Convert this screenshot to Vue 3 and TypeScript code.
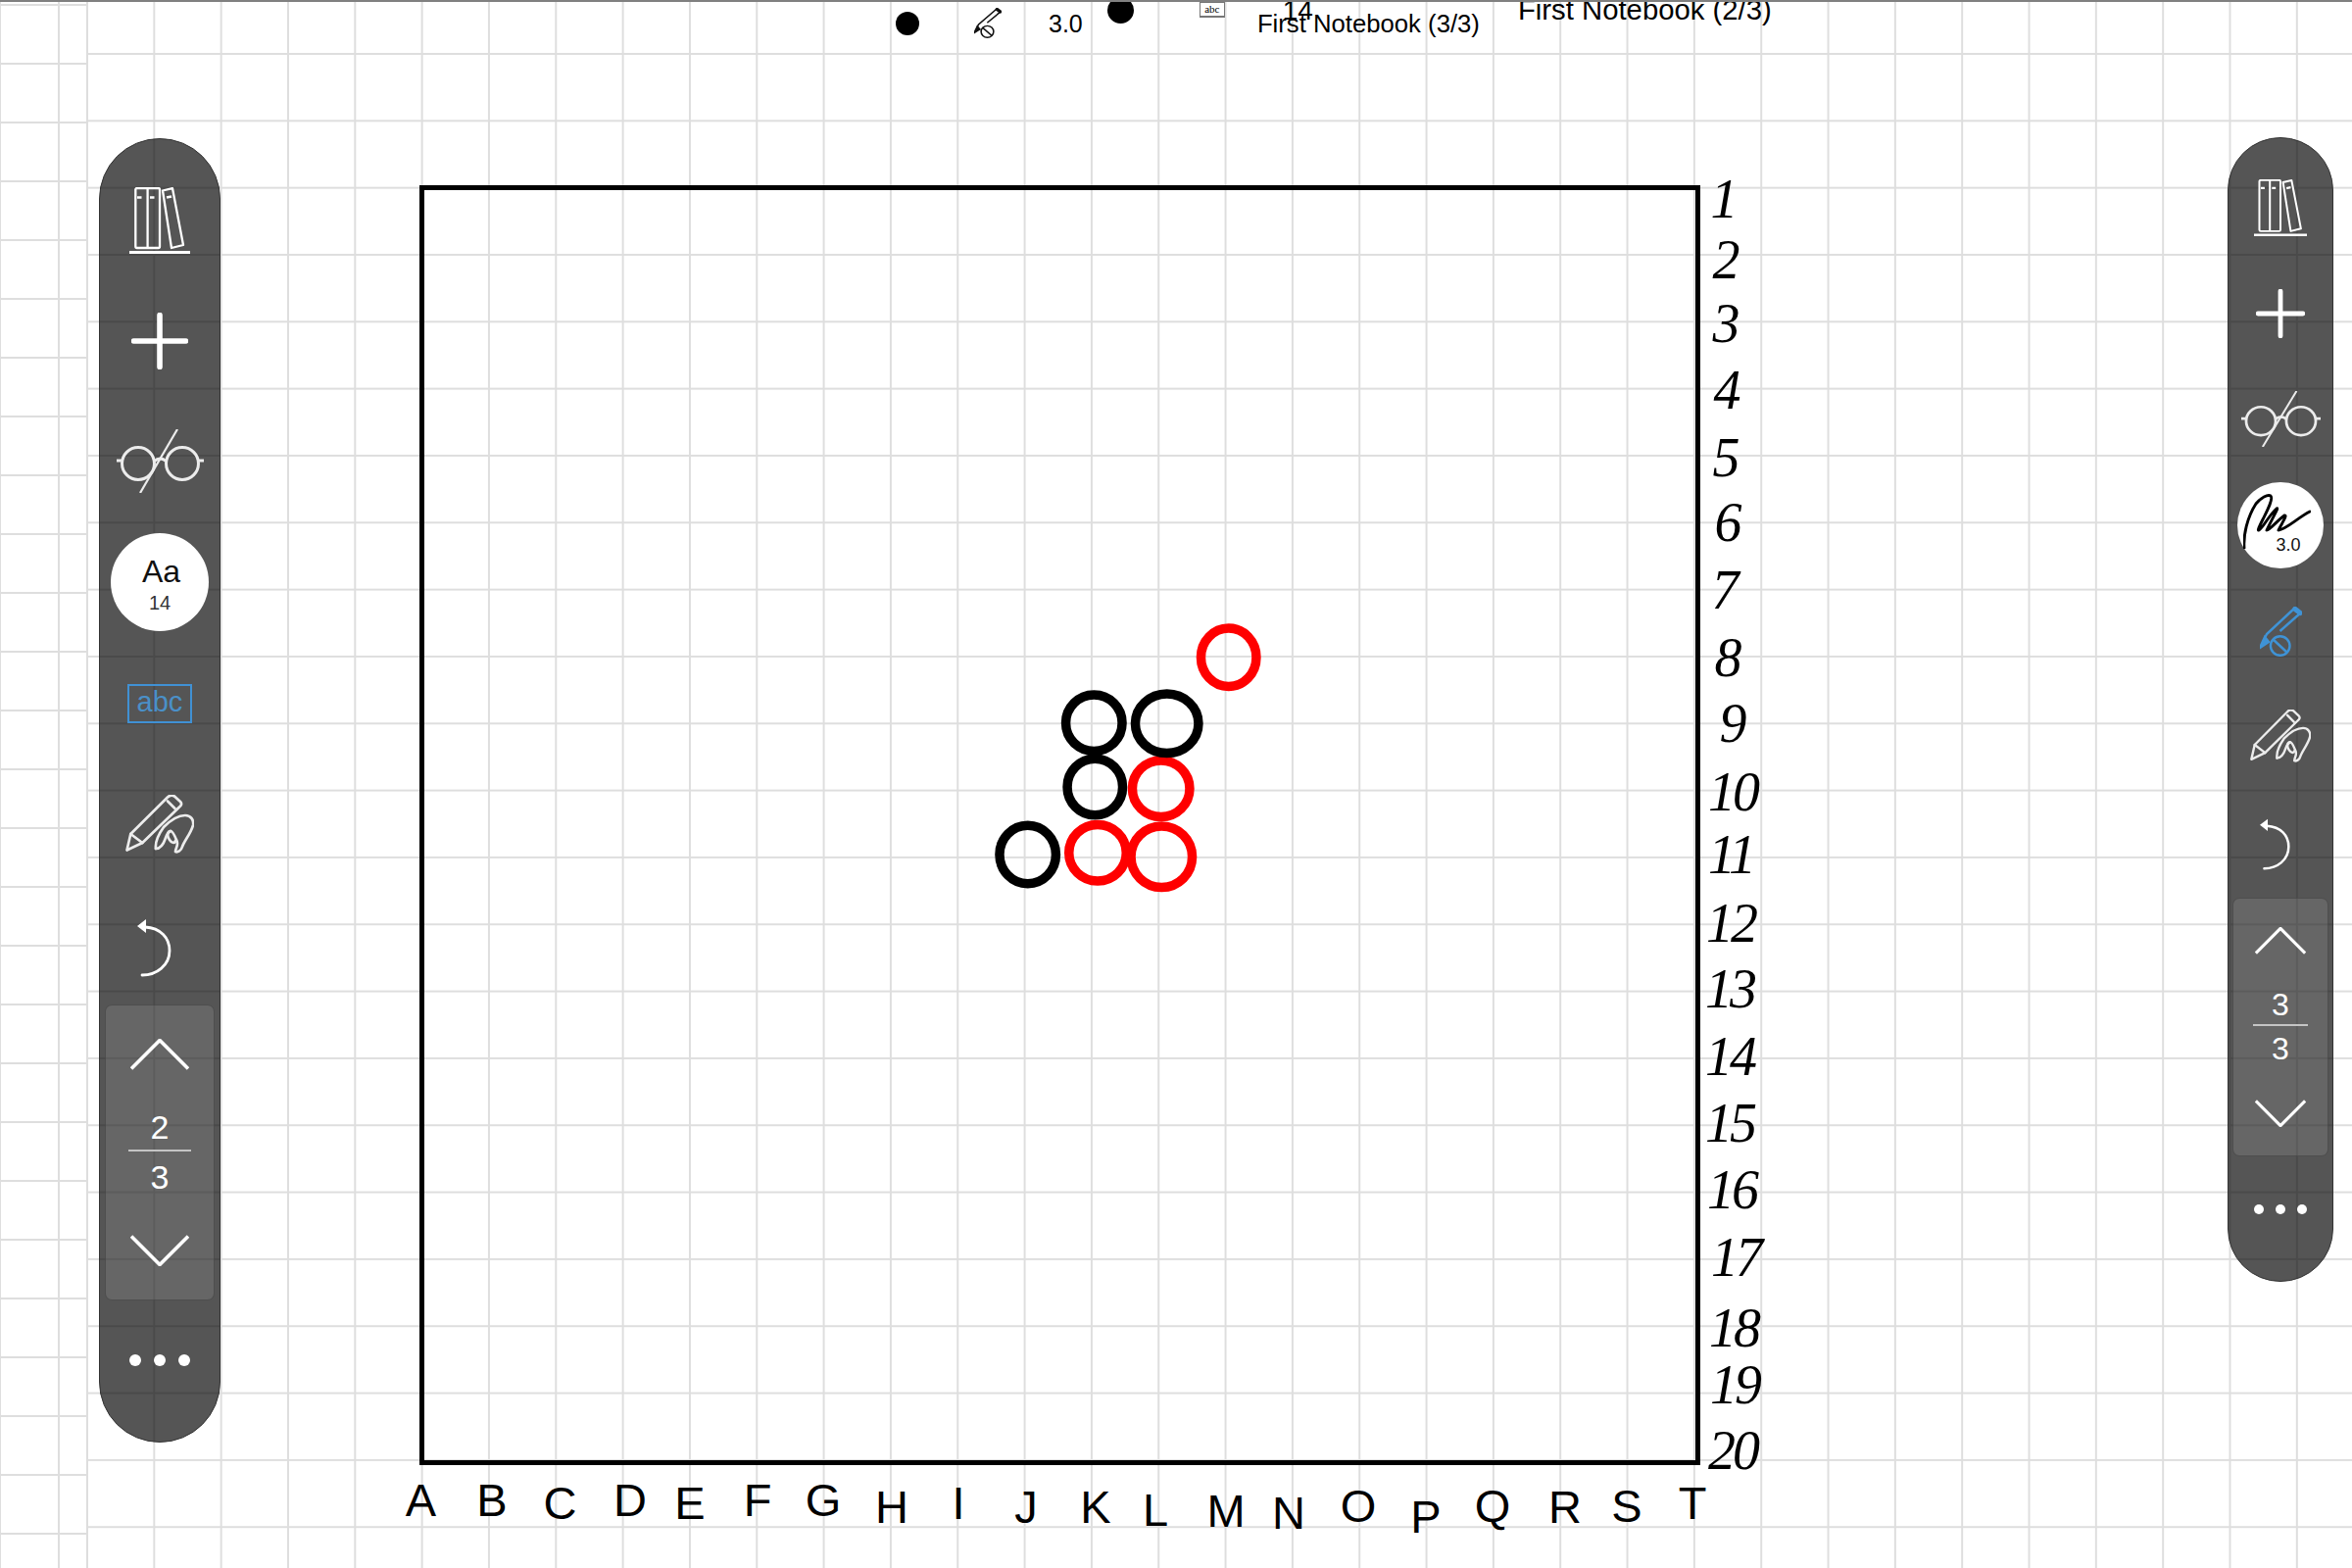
<script setup lang="ts">
interface Label { t: string; x: number; y: number }
interface Stone { cx: number; cy: number; w: number; h: number; c: string }

const letterRows: [string, number, number][] = [
  ['A', 429.5, 1547], ['B', 502, 1547], ['C', 571.5, 1550], ['D', 643, 1547], ['E', 704, 1550],
  ['F', 773, 1547], ['G', 840, 1547], ['H', 910, 1554], ['I', 978, 1550], ['J', 1047, 1554],
  ['K', 1118, 1554], ['L', 1179, 1557], ['M', 1251, 1558], ['N', 1315, 1560], ['O', 1386, 1553],
  ['P', 1455, 1564], ['Q', 1523, 1553], ['R', 1597, 1554], ['S', 1660, 1553], ['T', 1727, 1550],
]
const letters: Label[] = letterRows.map(([t, x, y]) => ({ t, x, y }))

const numberRows: [string, number, number][] = [
  ['1', 1758, 222], ['2', 1760, 284], ['3', 1760, 349], ['4', 1761, 417], ['5', 1760, 486],
  ['6', 1762, 552], ['7', 1759, 621], ['8', 1762, 690], ['9', 1767, 757], ['10', 1768, 827],
  ['11', 1766, 891], ['12', 1766, 961], ['13', 1765, 1028], ['14', 1765, 1097], ['15', 1765, 1165],
  ['16', 1767, 1233], ['17', 1771, 1302], ['18', 1769, 1374], ['19', 1770, 1432], ['20', 1768, 1499],
]
const numbers: Label[] = numberRows.map(([t, x, y]) => ({ t, x, y }))

const RED = '#ff0000'
const BLACK = '#000000'
const stones: Stone[] = [
  { cx: 1184.7, cy: 804.7, w: 68, h: 67, c: RED },
  { cx: 1190.7, cy: 738.3, w: 74, h: 70, c: BLACK },
  { cx: 1116.3, cy: 737.7, w: 67, h: 67, c: BLACK },
  { cx: 1117.3, cy: 803, w: 66, h: 67, c: BLACK },
  { cx: 1048.7, cy: 872, w: 67, h: 69, c: BLACK },
  { cx: 1120, cy: 870.3, w: 68, h: 67, c: RED },
  { cx: 1185.3, cy: 874.3, w: 72, h: 72, c: RED },
  { cx: 1253.7, cy: 670.7, w: 66, h: 69, c: RED },
]
const STROKE = 9.5

const toolbars = [
  { id: 'left', page: '2', total: '3' },
  { id: 'right', page: '3', total: '3' },
]
</script>

<template>
  <div class="page">
    <svg class="defs" width="0" height="0" aria-hidden="true">
      <symbol id="i-books" viewBox="0 0 62 68" preserveAspectRatio="none">
        <g fill="none" stroke="currentColor" stroke-width="2.3">
          <rect x="6.3" y="1" width="24.7" height="61" rx="1.5" />
          <path d="M18.6 1V62" />
          <path d="M34 3.5 44 1.2 55 59 43 62Z" stroke-linejoin="round" />
          <path d="M8 10.5h4.5M21 10.5h4.5M38 10.6l5-1" stroke-width="2.6" />
          <path d="M0 66.5H62" stroke-width="3" />
        </g>
      </symbol>
      <symbol id="i-plus" viewBox="0 0 58 58" preserveAspectRatio="none">
        <path d="M29 2.5V55.5M2.5 29H55.5" fill="none" stroke="currentColor" stroke-width="5.6" stroke-linecap="round" />
      </symbol>
      <symbol id="i-glasses" viewBox="0 0 89 65" preserveAspectRatio="none">
        <g fill="none" stroke="currentColor" stroke-width="3">
          <circle cx="22" cy="35" r="16.5" />
          <circle cx="67" cy="35" r="16.5" />
          <path d="M0 32H5.5M83.5 32H89" />
          <path d="M38 33Q44.5 27 51 33" />
          <path d="M24 65 62 0" stroke-width="2.2" />
        </g>
      </symbol>
      <symbol id="i-pencil-hand" viewBox="0 0 70 60" preserveAspectRatio="none">
        <g fill="none" stroke="currentColor" stroke-width="2.7" stroke-linejoin="round" stroke-linecap="round">
          <path d="M1.5 56.5 5.3 40 43 2.5C45 .5 48 .2 50 1.5L56 7C58 9 57 11 55 12.5L17.3 49Z" />
          <path d="M5.3 40 17.3 49M43 6.5 50.5 14" />
          <path d="M31 55C30 48 34 40 39 33 46 26 54 21 61 21 67 21 70 26 69 31 67 39 60 47 58 53 57 57 53 59 51 58 51 54 55 51 52 46 50 41 48 37 46 37 43 37 42 42 45 46 47 49 50 50 51 47" />
          <path d="M31 55C36 55 39 50 41 44 42 41 44 38 46 37" />
        </g>
      </symbol>
      <symbol id="i-undo" viewBox="0 0 36 62" preserveAspectRatio="none">
        <path d="M8 11C24 12 33 22 33 35 33 50 20 60 5 60" fill="none" stroke="currentColor" stroke-width="2.8" stroke-linecap="round" />
        <path d="M0 10 9 3V17Z" fill="currentColor" />
      </symbol>
      <symbol id="i-chev-up" viewBox="0 0 60 32" preserveAspectRatio="none">
        <path d="M1 30.5 30 1.5 59 30.5" fill="none" stroke="currentColor" stroke-width="3.6" />
      </symbol>
      <symbol id="i-chev-down" viewBox="0 0 60 32" preserveAspectRatio="none">
        <path d="M1 1.5 30 30.5 59 1.5" fill="none" stroke="currentColor" stroke-width="3.6" />
      </symbol>
      <symbol id="i-pen-erase" viewBox="0 0 43 51" preserveAspectRatio="none">
        <g fill="none" stroke="currentColor" stroke-width="2.4">
          <path d="M0 42 5 31 9 36Z" fill="currentColor" />
          <path d="M5 32 7 28 35.5 1.5M20.5 25 42 6" />
          <path d="M36 2.5 41 6.5" stroke-width="5.4" stroke-linecap="round" />
          <circle cx="20.7" cy="40" r="9.8" />
          <path d="M13.5 33.5 27.5 46.5" />
        </g>
      </symbol>
      <symbol id="i-signature" viewBox="0 0 69 56" preserveAspectRatio="none">
        <path d="M1 55C0 42 4 24 13 10 18 4 25 0 28 2 31 5 24 18 20 26 17 32 14 38 16 37 20 35 26 22 34 15 37 13 30 24 24 37 26 38 36 26 42 22 46 21 38 32 36 37 44 36 56 24 68 18" fill="none" stroke="currentColor" stroke-width="2.9" stroke-linecap="round" stroke-linejoin="round" />
      </symbol>
    </svg>

    <div class="topline"></div>
    <div class="body">
      <aside class="margin"></aside>
      <main class="sheet">
        <div class="stray">
          <span class="s-dot1"></span>
          <svg class="s-pen"><use href="#i-pen-erase" width="100%" height="100%" /></svg>
          <span class="s-width">3.0</span>
          <span class="s-dot2"></span>
          <span class="s-abc">abc</span>
          <span class="s-14">14</span>
          <span class="s-nb3">First Notebook (3/3)</span>
          <span class="s-nb2">First Notebook (2/3)</span>
        </div>

        <div class="stage">
          <template v-for="tb in toolbars" :key="tb.id">
            <div v-if="tb.id === 'right'" class="board-wrap">
              <div class="board"></div>
              <svg class="overlay" viewBox="428 189 1307 1306">
                <ellipse
                  v-for="(s, i) in stones"
                  :key="i"
                  :cx="s.cx"
                  :cy="s.cy"
                  :rx="(s.w - STROKE) / 2"
                  :ry="(s.h - STROKE) / 2"
                  fill="none"
                  :stroke="s.c"
                  :stroke-width="STROKE"
                />
                <text v-for="l in letters" :key="l.t" class="letter" :x="l.x" :y="l.y" text-anchor="middle">{{ l.t }}</text>
                <text v-for="n in numbers" :key="n.t" class="number" :x="n.x" :y="n.y" text-anchor="middle">{{ n.t }}</text>
              </svg>
            </div>

            <nav class="toolbar" :class="tb.id">
              <div class="row"><svg class="books"><use href="#i-books" width="100%" height="100%" /></svg></div>
              <div class="row"><svg class="plus"><use href="#i-plus" width="100%" height="100%" /></svg></div>
              <div class="row"><svg class="glasses"><use href="#i-glasses" width="100%" height="100%" /></svg></div>
              <template v-if="tb.id === 'left'">
                <div class="row">
                  <div class="badge">
                    <span class="aa">Aa</span>
                    <span class="aa-size">14</span>
                  </div>
                </div>
                <div class="row"><span class="abc">abc</span></div>
              </template>
              <template v-else>
                <div class="row">
                  <div class="badge">
                    <svg class="signature"><use href="#i-signature" width="100%" height="100%" /></svg>
                    <span class="pen-size">3.0</span>
                  </div>
                </div>
                <div class="row"><svg class="pen-blue"><use href="#i-pen-erase" width="100%" height="100%" /></svg></div>
              </template>
              <div class="row"><svg class="pencil"><use href="#i-pencil-hand" width="100%" height="100%" /></svg></div>
              <div class="row"><svg class="undo"><use href="#i-undo" width="100%" height="100%" /></svg></div>
              <div class="pager">
                <svg class="chev"><use href="#i-chev-up" width="100%" height="100%" /></svg>
                <div class="fraction">
                  <span class="num">{{ tb.page }}</span>
                  <span class="den">{{ tb.total }}</span>
                </div>
                <svg class="chev"><use href="#i-chev-down" width="100%" height="100%" /></svg>
              </div>
              <div class="row dots"><i></i><i></i><i></i></div>
            </nav>
          </template>
        </div>
      </main>
    </div>
  </div>
</template>

<style scoped>
.page {
  width: 2400px;
  height: 1600px;
  overflow: hidden;
  display: flex;
  flex-direction: column;
  font-family: "Liberation Sans", Arial, sans-serif;
  color: #000;
  background-color: #fff;
}
.defs { position: absolute; }
.topline { height: 2px; flex: none; background: #808080; }
.body { flex: 1; display: flex; min-height: 0; }
.margin {
  width: 88px;
  flex: none;
  background-image:
    linear-gradient(#dedede 2px, transparent 2px),
    linear-gradient(90deg, #dedede 2px, transparent 2px);
  background-size: 60px 60px;
  background-position: 0 2px, 59px 0;
}
.sheet {
  flex: 1;
  min-width: 0;
  background-image:
    linear-gradient(#dedede 2px, transparent 2px),
    linear-gradient(90deg, #dedede 2px, transparent 2px);
  background-size: 68.33px 68.33px;
  background-position: 0 52px, 0 0;
}

/* Stray measuring row, clipped by the top edge */
.stray {
  height: 48px;
  overflow: hidden;
  display: flex;
  align-items: flex-start;
  padding-left: 826px;
  white-space: nowrap;
}
.stray > * { flex: none; }
.s-dot1 { width: 24px; height: 24px; margin-top: 10px; border-radius: 50%; background: #000; }
.s-pen { width: 28px; height: 31px; margin: 6px 0 0 56px; color: #111; }
.s-width { font-size: 25px; line-height: 25px; margin: 10px 0 0 48px; }
.s-dot2 { width: 27px; height: 27px; margin: -5px 0 0 25px; border-radius: 50%; background: #000; }
.s-abc {
  width: 26px;
  height: 16px;
  margin-left: 67px;
  box-sizing: border-box;
  border: 1px solid #777;
  border-bottom-width: 2px;
  font-size: 11px;
  line-height: 13px;
  text-align: center;
  background: #fff;
  font-family: "Liberation Serif", serif;
}
.s-14 { font-size: 28px; line-height: 28px; margin: -5px 0 0 59px; }
.s-nb3 { font-size: 25.7px; line-height: 26px; margin: 8.5px 0 0 -57px; }
.s-nb2 { font-size: 29.3px; line-height: 29px; margin: -7.5px 0 0 39px; }

.stage { display: flex; align-items: flex-start; }

/* Board */
.board-wrap {
  position: relative;
  width: 1307px;
  height: 1306px;
  margin: 139px 0 0 202.5px;
  flex: none;
}
.board { width: 100%; height: 100%; box-sizing: border-box; border: 5px solid #000; }
.overlay { position: absolute; inset: 0; width: 100%; height: 100%; overflow: visible; }
.letter { font-family: "Liberation Sans", Arial, sans-serif; font-size: 47px; fill: #000; }
.number { font-family: "Liberation Serif", "Times New Roman", serif; font-style: italic; font-size: 56px; letter-spacing: -3px; fill: #000; }

/* Toolbars */
.toolbar {
  flex: none;
  box-sizing: border-box;
  display: flex;
  flex-direction: column;
  align-items: center;
  color: #fff;
  background: rgba(0, 0, 0, 0.667);
  border: 1.5px solid #333;
}
.row { flex: none; display: flex; align-items: center; justify-content: center; width: 100%; }
.row svg { display: block; flex: none; }
.toolbar.left {
  width: 124px;
  height: 1331px;
  margin: 91px 0 0 13px;
  padding-top: 21px;
  border-radius: 62px;
}
.toolbar.left .row { height: 123.5px; }
.toolbar.right {
  width: 108px;
  height: 1168px;
  margin: 90px 19px 0 auto;
  padding-top: 17px;
  border-radius: 54px;
}
.toolbar.right .row { height: 108px; }

.left .books { width: 62px; height: 68px; margin-right: 1px; }
.right .books { width: 54px; height: 58px; margin-right: 1px; }
.left .plus { width: 58px; height: 58px; margin-right: 1px; }
.right .plus { width: 50px; height: 50px; margin-right: 1px; }
.left .glasses { width: 89px; height: 65px; margin-bottom: 2px; }
.right .glasses { width: 81px; height: 57px; margin-bottom: 2px; }
.left .pencil { width: 70px; height: 60px; margin-bottom: 2px; }
.right .pencil { width: 62px; height: 54px; margin-bottom: 2px; }
.left .undo { width: 36px; height: 62px; margin-right: 10px; }
.right .undo { width: 32px; height: 55px; margin-right: 10px; }
.glasses, .pencil { color: #ececec; }

.badge {
  position: relative;
  border-radius: 50%;
  background: #fff;
  color: #111;
  display: flex;
  flex-direction: column;
  align-items: center;
  justify-content: center;
}
.left .badge { width: 100px; height: 100px; margin: 0 1px 3px 0; }
.right .badge { width: 88px; height: 88px; margin-right: 1px; }
.aa { font-size: 32px; line-height: 34px; margin: 5px 0 0 4px; }
.aa-size { font-size: 20px; line-height: 24px; color: #333; margin: 3px 0 0 1px; }
.signature { width: 69px; height: 56px; margin: -8px 0 0 -6px; color: #000; }
.pen-size { position: absolute; right: 23px; bottom: 15px; font-size: 18px; line-height: 18px; color: #111; }

.abc {
  width: 66px;
  height: 40px;
  box-sizing: border-box;
  border: 2px solid #4091d4;
  color: #4a90c8;
  font-size: 29px;
  line-height: 33px;
  text-align: center;
  margin-bottom: 2px;
}
.pen-blue { width: 43px; height: 51px; color: #3f93d6; }

.pager {
  flex: none;
  box-sizing: border-box;
  display: flex;
  flex-direction: column;
  align-items: center;
  justify-content: space-between;
  background: rgba(255, 255, 255, 0.1);
  border: 1px solid rgba(60, 60, 60, 0.55);
  border-radius: 7px;
}
.left .pager { width: 112px; height: 302px; padding: 34px 0; margin-top: -3px; }
.right .pager { width: 98px; height: 264px; padding: 29px 0; margin-top: 1.5px; }
.chev { display: block; }
.left .chev { width: 60px; height: 32px; }
.right .chev { width: 52px; height: 28px; }
.fraction { display: flex; flex-direction: column; align-items: stretch; text-align: center; }
.left .fraction { width: 64px; font-size: 34px; line-height: 34px; }
.right .fraction { width: 56px; font-size: 32px; line-height: 32px; }
.num { border-bottom: 2px solid #c4c4c4; }
.left .num { padding-bottom: 6px; }
.left .den { padding-top: 9px; }
.right .num { padding-bottom: 4px; }
.right .den { padding-top: 7px; }

.dots i { display: block; border-radius: 50%; background: #fff; }
.left .dots { gap: 13px; }
.left .dots i { width: 12px; height: 12px; }
.right .dots { gap: 12px; }
.right .dots i { width: 10px; height: 10px; }
</style>
